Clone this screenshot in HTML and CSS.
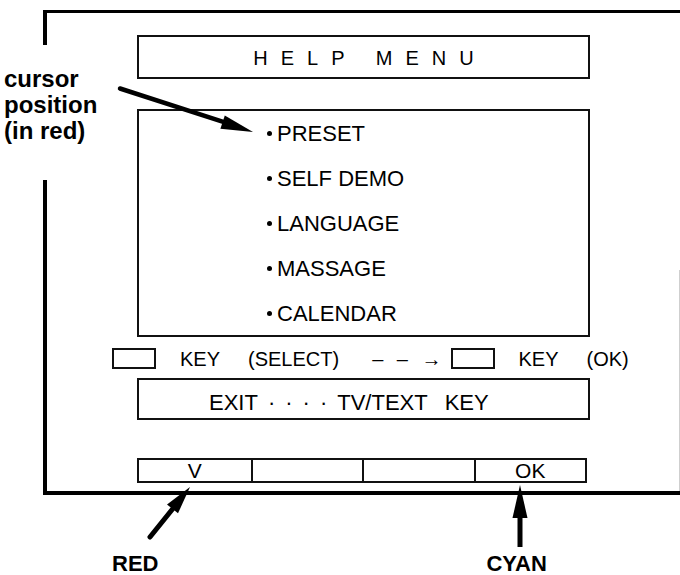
FILE: index.html
```html
<!DOCTYPE html>
<html>
<head>
<meta charset="utf-8">
<link rel="stylesheet" href="styles.css">
</head>
<body>
<div class="page">
  <div class="frame">
    <div class="screen">
      <div class="title">HELP MENU</div>
      <ul class="menu">
        <li>PRESET</li>
        <li>SELF DEMO</li>
        <li>LANGUAGE</li>
        <li>MASSAGE</li>
        <li>CALENDAR</li>
      </ul>
      <div class="keyrow">
        <span class="keybox"></span>
        <span class="k1">KEY</span>
        <span class="k2">(SELECT)</span>
        <span class="k3">– – →</span>
        <span class="keybox kb2"></span>
        <span class="k4">KEY</span>
        <span class="k5">(OK)</span>
      </div>
      <div class="exit"><span>EXIT</span><span class="dots">····</span><span>TV/TEXT</span><span class="exitkey">KEY</span></div>
      <div class="bar">
        <div class="cell">V</div>
        <div class="cell"></div>
        <div class="cell"></div>
        <div class="cell">OK</div>
      </div>
    </div>
  </div>
  <div class="callouts">
    <span class="red">RED</span>
    <span class="cyan">CYAN</span>
  </div>
  <div class="cursorlabel">cursor<br>position<br>(in red)</div>
  <svg class="arrows" width="680" height="575" viewBox="0 0 680 575">
    <line x1="120" y1="88.5" x2="224" y2="122.2" stroke="#000" stroke-width="4.5" stroke-linecap="round"/>
    <polygon points="253,132 220.4,128.8 224.8,115.4" fill="#000"/>
    <line x1="150" y1="537" x2="173" y2="508.5" stroke="#000" stroke-width="5" stroke-linecap="round"/>
    <polygon points="190,487 178,513.3 167,504.5" fill="#000"/>
    <line x1="520" y1="547" x2="520" y2="515" stroke="#000" stroke-width="5"/>
    <polygon points="520,485 512.5,518 527.5,518" fill="#000"/>
  </svg>
</div>
</body>
</html>
```

FILE: styles.css
```css
* { box-sizing: border-box; }
html, body { margin: 0; padding: 0; background: #fff; }
body { font-family: "Liberation Sans", Arial, sans-serif; color: #000; }

.page { position: relative; width: 680px; height: 575px; overflow: hidden; }

.frame {
  position: relative;
  margin: 10px 0 0 43px;
  border-top: 3px solid #000;
  border-left: 4px solid #000;
  border-bottom: 4px solid #000;
  padding: 22px 0 8px 90px;
}
.frame::after {
  content: "";
  position: absolute;
  right: 0; top: 257px; bottom: 0;
  width: 1px;
  background: #cfcfcf;
}

.screen { display: flex; flex-direction: column; }

.title {
  width: 453px; height: 44px;
  border: 2px solid #111;
  text-align: center;
  font-size: 20px;
  line-height: 36px;
  padding-top: 3px;
  padding-left: 13px;
  letter-spacing: 13px;
}

.menu {
  list-style: none;
  margin: 30px 0 0 0;
  width: 453px; height: 228px;
  border: 2px solid #111;
  padding: 0 0 0 128px;
  font-size: 22px;
  line-height: 45px;
}
.menu li::before {
  content: "";
  display: inline-block;
  width: 5px; height: 5px;
  border-radius: 50%;
  background: #000;
  margin-right: 5px;
  vertical-align: 5px;
}

.keyrow {
  display: flex;
  align-items: center;
  height: 22px;
  margin: 10px 0 0 -25px;
  font-size: 20px;
  line-height: 22px;
  white-space: nowrap;
}
.keyrow span { padding-top: 1px; }
.keybox { width: 44px; height: 21px; border: 2px solid #111; }
.k1 { margin-left: 24px; }
.k2 { margin-left: 28px; }
.k3 { margin-left: 33px; letter-spacing: 4px; }
.kb2 { margin-left: 5px; }
.k4 { margin-left: 24px; }
.k5 { margin-left: 28px; }

.exit {
  margin-top: 9px;
  width: 453px; height: 42px;
  border: 2px solid #111;
  font-size: 22px;
  line-height: 22px;
  padding: 12px 0 0 70px;
  white-space: nowrap;
}
.dots { margin-left: 10px; letter-spacing: 10px; }
.exitkey { margin-left: 17px; }

.bar {
  margin-top: 38px;
  width: 450px; height: 25px;
  border: 2px solid #111;
  display: grid;
  grid-template-columns: repeat(4, 1fr);
  font-size: 21px;
  line-height: 21px;
  text-align: center;
}
.cell + .cell { border-left: 2px solid #111; }

.callouts {
  display: flex;
  margin-top: 57px;
  font-size: 22px;
  font-weight: bold;
  line-height: 24px;
}
.red { margin-left: 112px; }
.cyan { margin-left: 328px; }

.cursorlabel {
  position: absolute;
  left: 0; top: 45px;
  padding: 21px 0 36px 4px;
  width: 100px;
  background: #fff;
  font-size: 24px;
  font-weight: bold;
  line-height: 26px;
}

.arrows { position: absolute; left: 0; top: 0; pointer-events: none; }
```
